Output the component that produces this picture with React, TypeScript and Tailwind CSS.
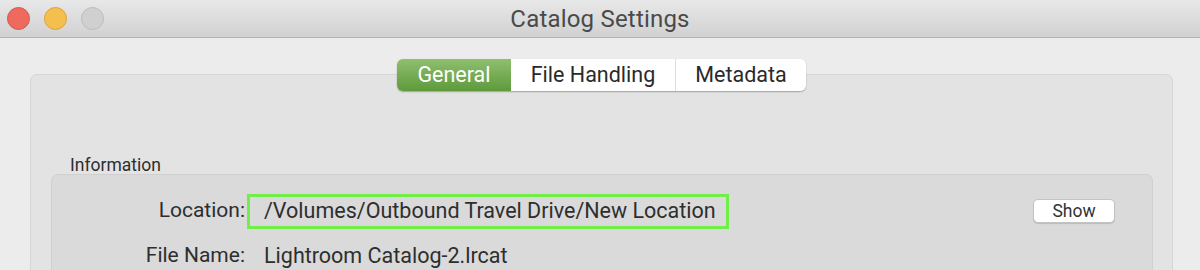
import React from "react";

export default function App() {
  return (
    <div
      className="w-[1200px] h-[270px] overflow-hidden bg-[#ececec] text-[#262626]"
      style={{ fontFamily: "Roboto, 'Noto Sans', sans-serif" }}
    >
      {/* Title bar */}
      <div className="relative h-[38px] bg-gradient-to-b from-[#e8e8e8] to-[#d1d1d1] border-b border-[#b4b4b4] flex items-center justify-center">
        <div className="absolute left-[7px] top-[7px] flex gap-[14px]">
          <div className="w-[23px] h-[23px] rounded-full bg-[#ee6a5f] border border-[#d8574d]" />
          <div className="w-[23px] h-[23px] rounded-full bg-[#f5bf4f] border border-[#d9a23f]" />
          <div className="w-[23px] h-[23px] rounded-full bg-[#d0d0d0] border border-[#bcbcbc]" />
        </div>
        <span className="text-[24px] text-[#4a4a4a] tracking-[0.2px]">Catalog Settings</span>
      </div>

      {/* Body */}
      <div className="relative px-[30px] pt-[36px]">
        <div className="relative h-[300px] mr-[-3px] rounded-[7px] bg-[#e3e3e3] border border-[#d6d6d6]">
          {/* Tabs */}
          <div className="absolute left-[366px] top-[-16px] flex h-[32px] rounded-[6px] shadow-[0_1px_1.5px_rgba(0,0,0,0.3)] text-[21.5px]">
            <div className="w-[114px] flex items-center justify-center rounded-l-[6px] bg-gradient-to-b from-[#8fbf6e] to-[#5e9a3b] text-white">
              General
            </div>
            <div className="w-[165px] flex items-center justify-center bg-white border-r border-[#dcdcdc] text-[#2a2a2a]">
              File Handling
            </div>
            <div className="w-[130px] flex items-center justify-center rounded-r-[6px] bg-white text-[#2a2a2a]">
              Metadata
            </div>
          </div>

          <div className="pt-[79px] pl-[39px] text-[17.5px] leading-[22px] text-[#2e2e2e]">Information</div>

          {/* Inner panel */}
          <div className="ml-[20px] mr-[19px] mt-[-2px] h-[200px] rounded-[7px] bg-[#dadada] border border-[#d0d0d0]">
            <div className="flex items-center h-[34px] mt-[19px]">
              <div className="w-[193px] text-right text-[21px] text-[#2e2e2e]">Location:</div>
              <div className="ml-[2px] w-[482px] h-[35px] border-[3px] border-[#72ee48] flex items-center pl-[14px] text-[21.5px] text-[#2e2e2e]">
                /Volumes/Outbound Travel Drive/New Location
              </div>
              <div className="ml-auto mr-[37px] w-[82px] h-[24px] rounded-[5px] bg-white border border-[#c4c4c4] shadow-[0_1px_1px_rgba(0,0,0,0.15)] flex items-center justify-center text-[17.5px] text-[#333]">
                Show
              </div>
            </div>
            <div className="flex items-center mt-[12px]">
              <div className="w-[193px] text-right text-[21px] text-[#2e2e2e]">File Name:</div>
              <div className="ml-[19px] text-[21.5px] text-[#2e2e2e]">Lightroom Catalog-2.lrcat</div>
            </div>
          </div>
        </div>
      </div>
    </div>
  );
}
